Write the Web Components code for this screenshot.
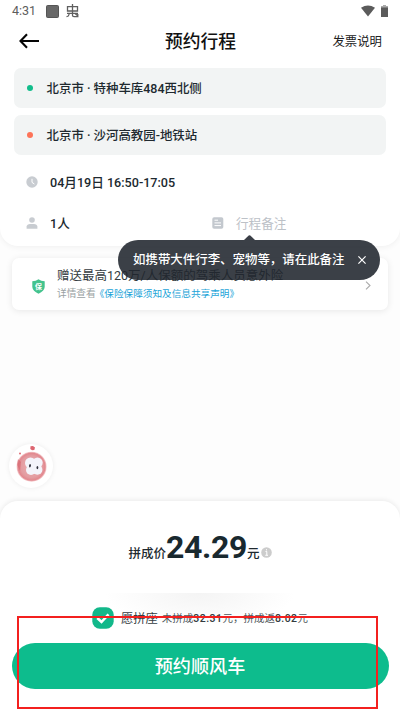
<!DOCTYPE html>
<html lang="zh-CN">
<head>
<meta charset="utf-8">
<title>预约行程</title>
<style>
html,body{margin:0;height:100%;overflow:hidden}
body{font-family:Roboto,"Noto Sans CJK SC",sans-serif;color:#1f2a30;background:#fdfdfd;line-height:1}
</style>
</head>
<body>
<ride-page></ride-page>
<script>
function define(name, html) {
  const t = document.createElement('template');
  t.innerHTML = '<style>*{box-sizing:border-box}svg{display:block;flex:none}</style>' + html;
  customElements.define(name, class extends HTMLElement {
    constructor() {
      super();
      this.attachShadow({mode: 'open'}).append(t.content.cloneNode(true));
    }
  });
}

define('status-bar', `
<style>
:host{display:flex;align-items:center;height:22px;padding:0 12px;font-size:12.5px;color:#5d5d5d}
.sq{width:13px;height:13px;border-radius:1.5px;background:#686868;margin:0 7px 0 10px;border:1px solid #555}
.gap{flex:1}
.bat{margin-left:6px}
</style>
<span>4:31</span><i class="sq"></i>
<svg width="13" height="14" viewBox="0 0 13 14" fill="none" stroke="#5f5f5f" stroke-width="1.3"><path d="M1.5 2.6H11.5V7H1.5ZM6.5 0V11.5Q6.5 12.6 8 12.6H11.8V10M3 9V10.500Q2.700 12.500.5 12.700M8.700 9.200 12 12M1 9.300H12"/></svg>
<i class="gap"></i>
<svg width="14" height="12" viewBox="0 0 14 12"><path d="M0 2.7Q7-1.8 14 2.7L7 11.5Z" fill="#5b5b5b"/></svg>
<svg class="bat" width="7" height="12" viewBox="0 0 7 12"><path d="M2 0H5V1H7V3H0V1H2Z" fill="#aaa"/><path d="M0 2.5H7V12H0Z" fill="#5b5b5b"/></svg>
`);

define('nav-bar', `
<style>
:host{display:grid;grid-template-columns:1fr auto 1fr;align-items:center;height:38px;padding:0 18px 0 19px;color:#111}
.t{font-size:17.8px;font-weight:500;padding-top:2px}
.r{justify-self:end;font-size:12.4px;color:#222;padding-top:2px}
</style>
<svg width="21" height="16" viewBox="0 0 21 16" fill="none" stroke="#050505" stroke-width="2.1"><path d="M20 8H1.5M8 1.3 1.5 8 8 14.7"/></svg>
<span class="t">预约行程</span><span class="r">发票说明</span>
`);

define('place-row', `
<style>
:host{display:flex;align-items:center;height:40px;border-radius:7px;background:#f2f4f4;padding-left:13px;font-size:12.45px;font-weight:500;color:#20292f;white-space:pre}
i{width:6px;height:6px;border-radius:50%;background:var(--dot);margin-right:13.5px}
span{padding-top:2px}
</style>
<i></i><span><slot></slot></span>
`);

define('info-cell', `
<style>
:host{display:flex;align-items:center;gap:12px;font-size:12.6px;font-weight:500;color:#20292f;white-space:nowrap}
span{padding-top:2px}
</style>
<slot name="icon"></slot><span><slot></slot></span>
`);

define('note-tip', `
<style>
:host{display:flex;align-items:center;justify-content:space-between;height:40px;padding:0 14px 0 15px;border-radius:20px;background:rgba(32,37,46,.88);color:#fff;font-size:12.45px;font-weight:500;white-space:nowrap}
.arrow{position:absolute;left:126px;top:-5px}
</style>
<svg class="arrow" width="11" height="5" viewBox="0 0 11 5"><path d="M0 5 4.7.6Q5.5 0 6.3.6L11 5Z" fill="#3b3f47"/></svg>
<slot></slot>
<svg width="8" height="8" viewBox="0 0 8 8" stroke="#fff" stroke-width="1.2"><path d="M.4.4 7.6 7.6M7.6.4.4 7.6"/></svg>
`);

define('trip-card', `
<style>
:host{display:block;height:246px;background:#fff;border-radius:0 0 18px 18px;box-shadow:0 1px 6px rgba(0,0,0,.06)}
.places{display:flex;flex-direction:column;gap:7px;padding:8px 14.5px 0 14px}
.when{padding:13px 26px 0;height:41px}
.row{display:grid;grid-template-columns:186px 1fr;padding:20px 26px 0}
.muted{color:#bcc1c7;font-weight:400}
</style>
<status-bar></status-bar><nav-bar></nav-bar>
<div class="places">
<place-row style="--dot:#12bd8b">北京市 · 特种车库484西北侧</place-row>
<place-row style="--dot:#fd7358">北京市 · 沙河高教园-地铁站</place-row>
</div>
<div class="when"><info-cell><svg slot="icon" width="12" height="28" viewBox="0 -8 12 28"><circle cx="6" cy="6" r="5.7" fill="#c8ccd1"/><path d="M6 2.8V6.4L8.4 8" fill="none" stroke="#fff" stroke-width="1"/></svg>04月19日 16:50-17:05</info-cell></div>
<div class="row"><info-cell><svg slot="icon" width="12" height="12" viewBox="0 0 12 12" fill="#c8ccd1"><circle cx="6" cy="3" r="2.8"/><path d="M.6 11.8V9.5Q1 7 4 7H8Q11 7 11.4 9.5V11.8Z"/></svg>1人</info-cell>
<info-cell class="muted"><svg slot="icon" width="12" height="12" viewBox="0 0 12 12"><rect x=".3" y=".2" width="11" height="11.6" rx="1.8" fill="#c3c8ce"/><path d="M2.5 3.2H6M2.5 5.9H9M2.5 8.6H9" stroke="#fff"/></svg>行程备注</info-cell></div>
`);

define('insurance-card', `
<style>
:host{display:flex;align-items:center;height:52px;margin:12px 12px 0;padding:0 17px 0 20px;background:#fff;border-radius:7px;box-shadow:0 1px 7px rgba(0,0,0,.09)}
.tx{flex:1;margin-left:12px;white-space:nowrap;display:flex;flex-direction:column;gap:6px}
.a{font-size:12.5px;line-height:14px;color:#333b40}
.b{font-size:9.7px;line-height:10px;color:#999fa3;display:flex}
.b em{font-style:normal;color:#1ba4d8;font-size:9.65px;margin-left:-1px}
.s{margin-top:4px}
</style>
<svg class="s" width="13" height="15" viewBox="0 0 13 15"><path d="M6.5.3Q9 2.1 12.7 2.3V8Q12.3 12 6.5 14.7.7 12 .3 8V2.3Q4 2.1 6.5.3Z" fill="#43c38e"/><text x="6.5" y="10" font-size="7" font-weight="700" text-anchor="middle" fill="#fff">保</text></svg>
<div class="tx"><div class="a">赠送最高120万/人保额的驾乘人员意外险</div><div class="b">详情查看<em>《保险保障须知及信息共享声明》</em></div></div>
<svg width="6" height="9" viewBox="0 0 6 9" fill="none" stroke="#aaa" stroke-width="1.1" style="margin-top:3px"><path d="M1 .6 5 4.5 1 8.4"/></svg>
`);

define('mascot-button', `
<style>
:host{display:grid;place-items:center;width:44px;height:44px;border-radius:50%;background:#fff;box-shadow:0 0 5px rgba(0,0,0,.07)}
</style>
<svg width="44" height="44" viewBox="0 0 44 44">
<defs><radialGradient id="g"><stop offset="0" stop-color="#eeb0b3"/><stop offset=".72" stop-color="#e39ca1"/><stop offset=".9" stop-color="#e2888f"/><stop offset="1" stop-color="#f6d0d2"/></radialGradient></defs>
<circle cx="22.6" cy="22.7" r="15" fill="url(#g)"/>
<path d="M9 15Q8.5 17 8.3 21L11 27 12 18Z" fill="#d5636c" opacity=".6"/>
<path d="M21.5 2.3 24 2 26 3.5 25.3 6 23 6.3 21.3 5Z" fill="#dd6570"/><circle cx="11" cy="9.4" r="1" fill="#e06b75"/>
<g fill="#f4f4fb"><circle cx="21.5" cy="19" r="5.5"/><circle cx="28.5" cy="18.8" r="5.2"/><circle cx="22" cy="26" r="5"/><circle cx="28.4" cy="25.8" r="5"/><path d="M18 19H31V26H18Z"/></g>
<ellipse cx="21" cy="21.8" rx=".9" ry="1.7" fill="#30303c" transform="rotate(12 21 21.8)"/><ellipse cx="28.4" cy="23.6" rx=".9" ry="1.7" fill="#30303c"/>
</svg>
`);

define('price-line', `
<style>
:host{display:flex;align-items:baseline;justify-content:center;height:46px;font-size:12.5px;font-weight:500;color:#20292f}
b{font-size:32px;line-height:46px;letter-spacing:-.35px;color:#19292f}
svg{align-self:flex-end;margin:0 0 12px 1px}
</style>
<span>拼成价</span><b>24.29</b><span>元</span>
<svg width="11" height="11" viewBox="0 0 11 11"><circle cx="5.5" cy="5.5" r="5.3" fill="#ccc"/><path d="M4.5 4.5H5.8V8M4.3 8.3H7M5.5 2.2V3.4" fill="none" stroke="#fff" stroke-width="1"/></svg>
`);

define('pool-option', `
<style>
:host{display:flex;align-items:center;justify-content:center;height:48px;padding-top:2px;margin:0 80px;background:radial-gradient(ellipse 95px 34px at 50% 0,#f4f4f4,#fff);white-space:nowrap;font-size:12.3px;color:#343d42}
span{padding-top:2px}
.d{font-size:10.5px;margin-left:4px;color:#4f575c}
.d b{font-weight:500;color:#333b40;letter-spacing:.45px}
svg{margin-right:7px}
</style>
<svg width="22" height="22" viewBox="0 0 22 22"><rect x=".3" y=".3" width="21.4" height="21.4" rx="7.5" fill="#12b88a"/><path d="M5.3 11 9.5 15 16.5 7.3" fill="none" stroke="#fff" stroke-width="2.6"/></svg>
<span>愿拼座</span><span class="d">未拼成<b>32.31</b>元，拼成返<b>8.02</b>元</span>
`);

define('submit-button', `
<style>
:host{display:flex;align-items:center;justify-content:center;height:46px;margin:2px 11.5px 0;border-radius:23px;background:#0dbc8d;color:#fff;font-size:18.1px;font-weight:500}
span{padding-top:2px}
</style><span><slot></slot></span>
`);

define('order-panel', `
<style>
:host{display:block;height:211px;padding-top:23px;background:#fff;border-radius:18px 18px 0 0;box-shadow:0 -1px 5px rgba(0,0,0,.08)}
pool-option{margin-top:23px}
</style>
<price-line></price-line><pool-option></pool-option><submit-button>预约顺风车</submit-button>
`);

define('ride-page', `
<style>
:host{position:relative;display:flex;flex-direction:column;width:400px;height:712px;overflow:hidden}
.gap{flex:1}
note-tip{position:absolute;left:118px;top:240px;width:262px}
mascot-button{position:absolute;left:9px;top:444px}
.mark{position:absolute;left:17px;top:616px;width:361px;height:93px;border:2px solid #f3201f}
</style>
<trip-card></trip-card><insurance-card></insurance-card><div class="gap"></div><order-panel></order-panel>
<mascot-button></mascot-button>
<note-tip>如携带大件行李、宠物等，请在此备注</note-tip>
<div class="mark"></div>
`);
</script>
</body>
</html>
